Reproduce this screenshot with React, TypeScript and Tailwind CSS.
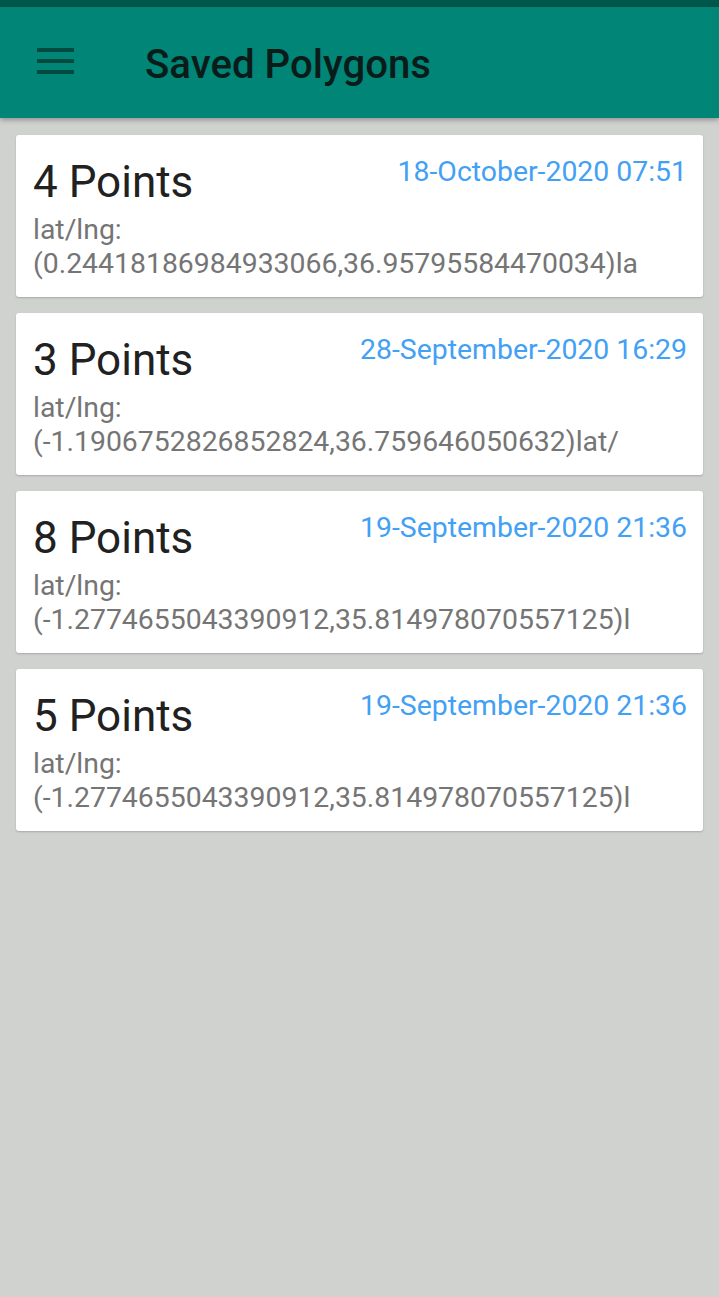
import React from "react";

const items = [
  { n: "4 Points", d: "18-October-2020 07:51", c: "(0.24418186984933066,36.95795584470034)la" },
  { n: "3 Points", d: "28-September-2020 16:29", c: "(-1.1906752826852824,36.759646050632)lat/" },
  { n: "8 Points", d: "19-September-2020 21:36", c: "(-1.2774655043390912,35.814978070557125)l" },
  { n: "5 Points", d: "19-September-2020 21:36", c: "(-1.2774655043390912,35.814978070557125)l" },
];

export default function App() {
  return (
    <div className="w-[719px] h-[1297px] bg-[#d0d2cf] overflow-hidden" style={{ fontFamily: "Roboto, 'Noto Sans', sans-serif" }}>
      <div className="h-[7px] bg-[#00574b]" />
      <div className="h-[111px] bg-[#008577] flex items-center shadow-[0_2px_5px_rgba(0,0,0,0.3)] relative z-10">
        <div className="ml-[37px] w-[37px] flex flex-col gap-[7px] mt-[-3px]">
          <div className="h-[4px] bg-[#004a40]" />
          <div className="h-[4px] bg-[#004a40]" />
          <div className="h-[4px] bg-[#004a40]" />
        </div>
        <div className="ml-[71px] mt-[5px] text-[40.2px] font-medium text-[#0a1c19] leading-none">Saved Polygons</div>
      </div>
      <div className="flex flex-col gap-[16px] px-[16px] pt-[17px]">
        {items.map((it, i) => (
          <div key={i} className="h-[162px] bg-white rounded-[3px] shadow-[0_1px_2px_rgba(0,0,0,0.2)] pl-[17px] pr-[16px] pt-[21px]">
            <div className="flex justify-between items-start">
              <div className="text-[44px] leading-[52px] text-[#212121]">{it.n}</div>
              <div className="text-[28.4px] leading-[32px] text-[#42a0f5]">{it.d}</div>
            </div>
            <div className="text-[28.4px] leading-[33.5px] text-[#757575] mt-[5px]">
              <div>lat/lng:</div>
              <div className="whitespace-nowrap">{it.c}</div>
            </div>
          </div>
        ))}
      </div>
    </div>
  );
}
